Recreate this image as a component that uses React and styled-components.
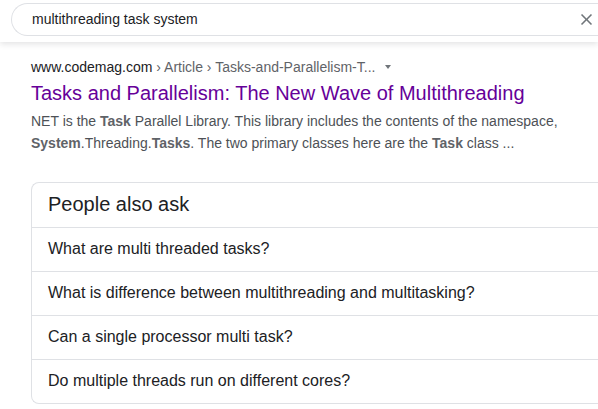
import React from 'react';
import styled, { createGlobalStyle } from 'styled-components';

const Global = createGlobalStyle`
  html, body {
    margin: 0;
    padding: 0;
    background: #fff;
    overflow: hidden;
  }
  body {
    font-family: "Liberation Sans", Arial, sans-serif;
    color: #202124;
  }
`;

const Header = styled.header`
  position: relative;
  z-index: 1;
  box-sizing: border-box;
  display: flex;
  height: 42px;
  padding: 3px 0 0 11px;
  background: #fff;
  box-shadow: 0 2px 6px rgba(32, 33, 36, 0.13);
`;

const SearchBox = styled.div`
  box-sizing: border-box;
  flex: 1;
  display: flex;
  align-items: center;
  height: 33px;
  padding: 0 2px 0 20px;
  border: 1px solid #dfe1e5;
  border-right: none;
  border-radius: 17px 0 0 17px;
  background: #fff;
`;

const Query = styled.span`
  flex: 1;
  font-size: 14px;
  line-height: 31px;
  color: #202124;
  white-space: nowrap;
`;

const ClearIcon = styled.svg`
  display: block;
  width: 19px;
  height: 19px;
  fill: #70757a;
`;

const Results = styled.main`
  padding: 16px 0 0 31px;
`;

const Cite = styled.div`
  display: flex;
  align-items: center;
  font-size: 14px;
  line-height: 18px;
  color: #202124;
  white-space: nowrap;
`;

const Crumbs = styled.span`
  color: #5f6368;
`;

const Caret = styled.span`
  width: 0;
  height: 0;
  margin-left: 10px;
  border-left: 3px solid transparent;
  border-right: 3px solid transparent;
  border-top: 4px solid #70757a;
`;

const Title = styled.h3`
  margin: 4px 0 0;
  font-size: 20px;
  line-height: 26px;
  font-weight: normal;
  color: #660099;
`;

const Snippet = styled.div`
  max-width: 540px;
  margin-top: 4px;
  font-size: 14px;
  line-height: 22px;
  color: #4d5156;

  b {
    color: #5f6368;
  }
`;

const AskBox = styled.section`
  margin-top: 28px;
  border: 1px solid #dfe1e5;
  border-right: none;
  border-radius: 8px 0 0 8px;
`;

const AskHeading = styled.h2`
  margin: 0;
  padding: 8px 16px 10px;
  font-size: 20px;
  line-height: 26px;
  font-weight: normal;
  color: #202124;
`;

const Question = styled.div`
  padding: 10px 16px 11px;
  border-top: 1px solid #dfe1e5;
  font-size: 16px;
  line-height: 22px;
  color: #202124;
`;

const questions = [
  'What are multi threaded tasks?',
  'What is difference between multithreading and multitasking?',
  'Can a single processor multi task?',
  'Do multiple threads run on different cores?',
];

export default function App() {
  return (
    <>
      <Global />
      <Header>
        <SearchBox>
          <Query>multithreading task system</Query>
          <ClearIcon viewBox="0 0 24 24">
            <path d="M19 6.41L17.59 5 12 10.59 6.41 5 5 6.41 10.59 12 5 17.59 6.41 19 12 13.41 17.59 19 19 17.59 13.41 12z" />
          </ClearIcon>
        </SearchBox>
      </Header>
      <Results>
        <Cite>
          www.codemag.com
          <Crumbs>&nbsp;› Article › Tasks-and-Parallelism-T...</Crumbs>
          <Caret />
        </Cite>
        <Title>Tasks and Parallelism: The New Wave of Multithreading</Title>
        <Snippet>
          NET is the <b>Task</b> Parallel Library. This library includes the contents of the namespace,{' '}
          <b>System</b>.Threading.<b>Tasks</b>. The two primary classes here are the <b>Task</b> class ...
        </Snippet>
        <AskBox>
          <AskHeading>People also ask</AskHeading>
          {questions.map((q) => (
            <Question key={q}>{q}</Question>
          ))}
        </AskBox>
      </Results>
    </>
  );
}
